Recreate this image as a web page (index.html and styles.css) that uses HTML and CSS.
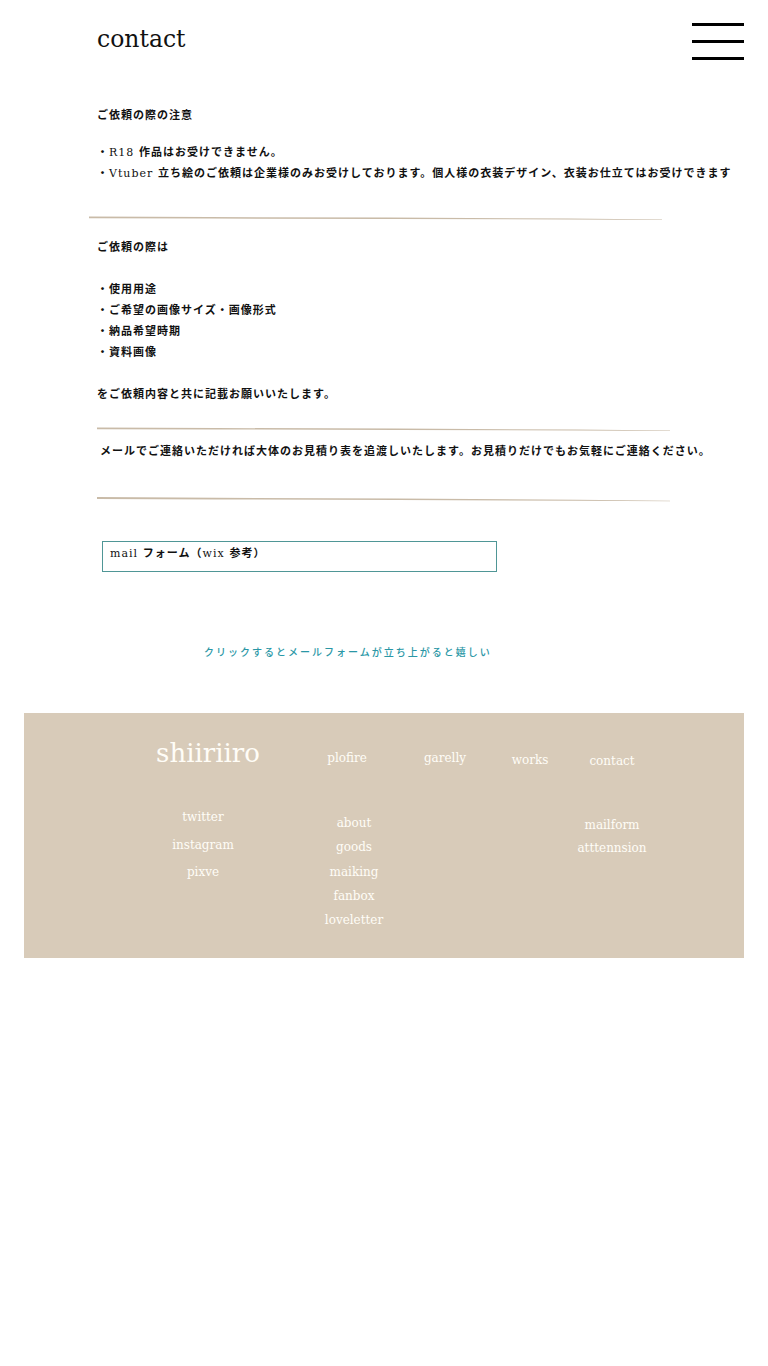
FILE: index.html
```html
<!DOCTYPE html>
<html lang="ja">
<head>
<meta charset="utf-8">
<title>contact</title>
<link rel="stylesheet" href="styles.css">
</head>
<body>
<header class="site-header">
  <h1 class="page-title">contact</h1>
  <button class="menu-btn" aria-label="menu"><span></span><span></span><span></span></button>
</header>
<main class="content">
  <p class="line">ご依頼の際の注意</p>
  <div class="notes">
    <p class="line">・<span class="lat">R18</span> 作品はお受けできません。</p>
    <p class="line">・<span class="lat">Vtuber</span> 立ち絵のご依頼は企業様のみお受けしております。個人様の衣装デザイン、衣装お仕立てはお受けできます</p>
  </div>
  <svg class="divider divider-1" width="575" height="8" viewBox="0 0 575 8" aria-hidden="true">
    <polygon points="0,2.4 120,3.0 300,3.6 480,4.6 573,5.6 573,6.0 480,5.5 300,5.0 120,4.5 0,4.2" fill="#c9bba8"/>
  </svg>
  <div class="request">
    <p class="line">ご依頼の際は</p>
    <p class="line spacer"></p>
    <p class="line">・使用用途</p>
    <p class="line">・ご希望の画像サイズ・画像形式</p>
    <p class="line">・納品希望時期</p>
    <p class="line">・資料画像</p>
    <p class="line spacer"></p>
    <p class="line">をご依頼内容と共に記載お願いいたします。</p>
  </div>
  <svg class="divider divider-2" width="575" height="8" viewBox="0 0 575 8" aria-hidden="true">
    <polygon points="0,2.4 120,3.0 300,3.6 480,4.6 573,5.6 573,6.0 480,5.5 300,5.0 120,4.5 0,4.2" fill="#c9bba8"/>
  </svg>
  <p class="line estimate">メールでご連絡いただければ大体のお見積り表を追渡しいたします。お見積りだけでもお気軽にご連絡ください。</p>
  <svg class="divider divider-3" width="575" height="8" viewBox="0 0 575 8" aria-hidden="true">
    <polygon points="0,2.0 120,2.8 300,3.6 480,4.8 573,5.8 573,6.3 480,5.7 300,5.0 120,4.4 0,4.0" fill="#c9bba8"/>
  </svg>
  <div class="mail-box"><p class="line"><span class="lat">mail</span> フォーム（<span class="lat">wix</span> 参考）</p></div>
  <p class="line hint">クリックするとメールフォームが立ち上がると嬉しい</p>
</main>
<footer class="site-footer">
  <div class="footer-top">
    <span class="brand">shiiriiro</span>
    <a class="nav nav-plofire">plofire</a>
    <a class="nav nav-garelly">garelly</a>
    <a class="nav nav-works">works</a>
    <a class="nav nav-contact">contact</a>
  </div>
  <div class="footer-links">
    <ul class="col col-sns">
      <li>twitter</li>
      <li>instagram</li>
      <li>pixve</li>
    </ul>
    <ul class="col col-works">
      <li>about</li>
      <li>goods</li>
      <li>maiking</li>
      <li>fanbox</li>
      <li>loveletter</li>
    </ul>
    <ul class="col col-contact">
      <li>mailform</li>
      <li>atttennsion</li>
    </ul>
  </div>
</footer>
</body>
</html>
```

FILE: styles.css
```css
* { box-sizing: border-box; }

html, body {
  margin: 0;
  padding: 0;
  background: #ffffff;
}

body {
  width: 768px;
  font-family: "DejaVu Serif", "Noto Sans CJK JP", serif;
  color: #111111;
}

.site-header {
  display: flex;
  justify-content: space-between;
  align-items: flex-start;
  height: 60px;
  padding: 23px 24px 0 97px;
}

.page-title {
  margin: 5px 0 0 0;
  font-family: "DejaVu Serif", serif;
  font-weight: normal;
  font-size: 23.5px;
  line-height: 23px;
  color: #111111;
}

.menu-btn {
  display: flex;
  flex-direction: column;
  gap: 14px;
  width: 52px;
  padding: 0;
  border: 0;
  background: none;
}

.menu-btn span {
  display: block;
  width: 52px;
  height: 3px;
  background: #000000;
}

.content {
  display: flex;
  flex-direction: column;
  align-items: flex-start;
  padding: 44.5px 0 0 97px;
}

.line {
  margin: 0;
  font-size: 11px;
  line-height: 21px;
  height: 21px;
  letter-spacing: 1px;
  font-weight: 700;
  white-space: nowrap;
}

.lat {
  font-weight: 400;
}

.notes {
  margin-top: 16.5px;
}

.divider {
  display: block;
}

.divider-1 {
  margin: 30px 0 0 -8px;
}

.request {
  margin-top: 15px;
}

.divider-2 {
  margin-top: 20px;
}

.estimate {
  margin: 8px 0 0 3px;
}

.divider-3 {
  margin-top: 33px;
}

.mail-box {
  margin: 38px 0 0 5px;
  width: 395px;
  height: 31px;
  border: 1px solid #4f9696;
  padding: 1px 7px 0 7px;
}

.hint {
  margin: 70px 0 0 107px;
  font-size: 10px;
  letter-spacing: 2px;
  font-weight: 500;
  color: #2a97a6;
}

.site-footer {
  margin: 50px 24px 0 24px;
  width: 720px;
  height: 245px;
  background: #d8cbb9;
  color: #fffdf7;
  font-family: "DejaVu Serif", serif;
}

.footer-top {
  display: flex;
  align-items: flex-start;
  height: 60px;
  padding: 25px 0 0 114px;
}

.brand {
  width: 140px;
  text-align: center;
  font-size: 26px;
  line-height: 30px;
  font-weight: 300;
}

.nav {
  width: 80px;
  text-align: center;
  font-size: 12px;
  line-height: 20px;
  margin-top: 10px;
}

.nav-plofire { margin-left: 29px; }
.nav-garelly { margin-left: 18px; }
.nav-works { margin-left: 5px; margin-top: 12px; }
.nav-contact { margin-left: 2px; margin-top: 13px; }

.footer-links {
  display: flex;
  align-items: flex-start;
  margin-top: 31px;
  padding-left: 109px;
}

.col {
  width: 140px;
  margin: 0;
  padding: 0;
  list-style: none;
  text-align: center;
  font-size: 12px;
}

.col-sns {
  line-height: 27.5px;
}

.col-works {
  margin-left: 11px;
  padding-top: 7px;
  line-height: 24.25px;
}

.col-contact {
  margin-left: 118px;
  padding-top: 9.5px;
  line-height: 23px;
}
```
